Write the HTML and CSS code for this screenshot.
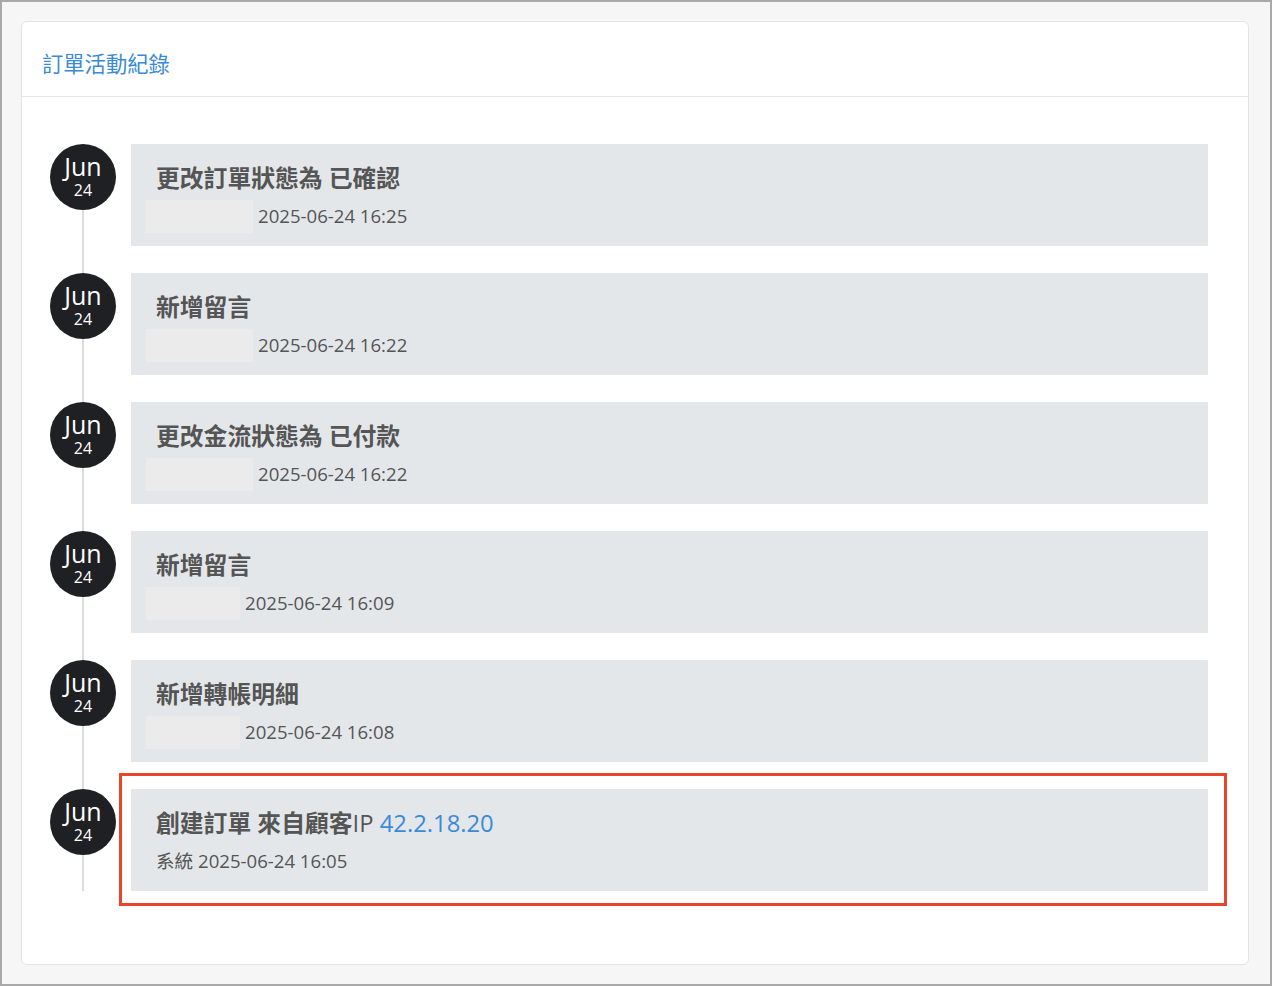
FILE: index.html
```html
<!DOCTYPE html>
<html lang="zh-Hant">
<head>
    <meta charset="UTF-8">
    <meta name="viewport" content="width=device-width, initial-scale=1.0">
    <title>訂單活動紀錄</title>
    <link rel="stylesheet" href="styles.css">
</head>
<body>
    <div class="page">
        <div class="card">
            <div class="card-header">訂單活動紀錄</div>
            <div class="card-body">
                <ul class="timeline">
                    <li class="event">
                        <div class="date-badge"><span class="month">Jun</span><span class="day">24</span></div>
                        <div class="event-box">
                            <p class="event-title">更改訂單狀態為 已確認</p>
                            <p class="event-meta"><span class="masked w-long"></span>2025-06-24 16:25</p>
                        </div>
                    </li>
                    <li class="event">
                        <div class="date-badge"><span class="month">Jun</span><span class="day">24</span></div>
                        <div class="event-box">
                            <p class="event-title">新增留言</p>
                            <p class="event-meta"><span class="masked w-long"></span>2025-06-24 16:22</p>
                        </div>
                    </li>
                    <li class="event">
                        <div class="date-badge"><span class="month">Jun</span><span class="day">24</span></div>
                        <div class="event-box">
                            <p class="event-title">更改金流狀態為 已付款</p>
                            <p class="event-meta"><span class="masked w-long"></span>2025-06-24 16:22</p>
                        </div>
                    </li>
                    <li class="event">
                        <div class="date-badge"><span class="month">Jun</span><span class="day">24</span></div>
                        <div class="event-box">
                            <p class="event-title">新增留言</p>
                            <p class="event-meta"><span class="masked w-short"></span>2025-06-24 16:09</p>
                        </div>
                    </li>
                    <li class="event">
                        <div class="date-badge"><span class="month">Jun</span><span class="day">24</span></div>
                        <div class="event-box">
                            <p class="event-title">新增轉帳明細</p>
                            <p class="event-meta"><span class="masked w-short"></span>2025-06-24 16:08</p>
                        </div>
                    </li>
                    <li class="event highlighted">
                        <div class="date-badge"><span class="month">Jun</span><span class="day">24</span></div>
                        <div class="event-box">
                            <p class="event-title">創建訂單 來自顧客<span class="plain">IP</span> <a class="ip" href="#">42.2.18.20</a></p>
                            <p class="event-meta">系統 2025-06-24 16:05</p>
                        </div>
                        <span class="highlight-frame"></span>
                    </li>
                </ul>
            </div>
        </div>
    </div>
</body>
</html>
```

FILE: styles.css
```css
html, body {
    margin: 0;
    padding: 0;
}
body {
    font-family: "Open Sans", "Noto Sans CJK TC", sans-serif;
    color: #555;
    background-color: #f6f6f6;
}
.page {
    box-sizing: border-box;
    height: 986px;
    border: 2px solid #a9a9a9;
    padding: 19px 21px 19px 19px;
    background-color: #f6f6f6;
}
.card {
    box-sizing: border-box;
    height: 944px;
    background-color: #fff;
    border: 1px solid #e4e4e4;
    border-radius: 6px;
}
.card-header {
    padding: 28px 20px 18px;
    font-size: 21.3px;
    line-height: 28px;
    color: #3a8ad8;
    border-bottom: 1px solid #e6e6e6;
}
.card-body {
    padding: 47px 40px 0 28px;
}
.timeline {
    list-style: none;
    margin: 0;
    padding: 0;
    position: relative;
}
.timeline::before {
    content: "";
    position: absolute;
    left: 32px;
    top: 10px;
    bottom: 0;
    width: 2px;
    background-color: #dcdcdc;
}
.event {
    display: flex;
    align-items: flex-start;
    gap: 15px;
    margin-bottom: 27px;
    position: relative;
}
.event:last-child {
    margin-bottom: 0;
}
.date-badge {
    position: relative;
    flex: 0 0 66px;
    height: 66px;
    border-radius: 50%;
    background-color: #1f2024;
    color: #fff;
    display: flex;
    flex-direction: column;
    align-items: center;
    justify-content: center;
}
.month {
    font-size: 25px;
    line-height: 24px;
    margin-top: -2px;
}
.day {
    font-size: 16px;
    line-height: 18px;
    margin-top: 3px;
}
.event-box {
    flex: 1;
    box-sizing: border-box;
    height: 102px;
    background-color: #e4e7ea;
    padding: 18px 25px 16px;
}
.event-title {
    margin: 0;
    font-size: 23.8px;
    line-height: 32px;
    font-weight: bold;
    color: #555;
}
.event-title .plain {
    font-weight: normal;
}
.ip {
    color: #3a8ad8;
    font-weight: normal;
    text-decoration: none;
}
.event-meta {
    margin: 8px 0 0;
    font-size: 18.6px;
    line-height: 28px;
    color: #555;
}
.masked {
    display: inline-block;
    height: 33px;
    vertical-align: middle;
    margin: -3px 5px 0 -10px;
    background-color: #ebebeb;
}
.w-long {
    width: 107px;
}
.w-short {
    width: 94px;
}
.highlight-frame {
    position: absolute;
    left: 69px;
    right: -19px;
    top: -16px;
    bottom: -15px;
    border: 3px solid #e8432b;
    pointer-events: none;
}
```
